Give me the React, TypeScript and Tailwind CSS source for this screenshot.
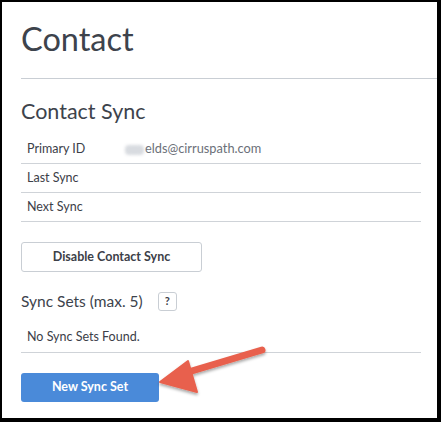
const Row = ({ label, value }: { label: string; value?: React.ReactNode }) => (
  <div className="flex h-[29px] items-center border-b border-[#cfd3d8] pl-[6px] text-[12.5px] text-[#3c4048]">
    <span className="w-[98px]">{label}</span>
    {value}
  </div>
)

const Arrow = () => (
  <svg
    className="absolute left-[150px] top-[340px]"
    width="125"
    height="60"
    viewBox="0 0 125 60"
  >
    <defs>
      <filter id="sh" x="-20%" y="-20%" width="140%" height="160%">
        <feDropShadow dx="0" dy="2" stdDeviation="1.5" floodColor="#000" floodOpacity="0.35" />
      </filter>
    </defs>
    <g filter="url(#sh)">
      <path d="M112 10 L35 33" stroke="#e8614d" strokeWidth="7" strokeLinecap="round" />
      <path d="M10 42 L38 21 L47 52 Z" fill="#e8614d" strokeLinejoin="round" stroke="#e8614d" strokeWidth="2" />
    </g>
  </svg>
)

export default function App() {
  return (
    <div
      className="relative h-[422px] w-[441px] overflow-hidden bg-black pb-[4px] pl-[2px] pr-[4px] pt-[2px]"
      style={{ fontFamily: 'Lato, "Open Sans", sans-serif' }}
    >
      <div className="h-full w-full bg-white">
        <div className="pl-[19px]">
          <h1 className="pt-[17px] text-[32.5px] leading-[40px] text-[#3d434c]">Contact</h1>
          <div className="mt-[19px] h-px bg-[#c9ced4]" />
        </div>
        <div className="px-[19px] pr-[16px]">
          <h2 className="mt-[20px] text-[21.5px] leading-[24px] text-[#3d434c]">Contact Sync</h2>
          <div className="mt-[12px]">
            <Row
              label="Primary ID"
              value={
                <span className="text-[12.8px] text-[#6b7079]">
                  <span className="mr-px inline-block h-[10px] w-[19px] rounded-sm bg-[#d8dbe0] align-middle blur-[1.5px]" />
                  elds@cirruspath.com
                </span>
              }
            />
            <Row label="Last Sync" />
            <Row label="Next Sync" />
          </div>
          <button className="mt-[20px] h-[30px] w-[181px] rounded-[3px] border border-[#c9ced4] bg-white text-[12.5px] font-bold text-[#3c4048]">
            Disable Contact Sync
          </button>
          <div className="mt-[18px] flex items-center">
            <h3 className="text-[15.5px] leading-[22px] text-[#3d434c]">Sync Sets (max. 5)</h3>
            <span className="ml-[15px] flex h-[19px] w-[19px] items-center justify-center rounded-[3px] border border-[#c9ced4] text-[11px] font-bold text-[#3c4048]">
              ?
            </span>
          </div>
          <div className="mt-[11px] flex h-[30px] items-center border-b border-[#cfd3d8] pl-[6px] text-[12.5px] text-[#3c4048]">
            No Sync Sets Found.
          </div>
          <button className="mt-[20px] h-[29px] w-[138px] rounded-[3px] bg-[#4a8ad9] text-[12.5px] font-bold text-white">
            New Sync Set
          </button>
        </div>
      </div>
      <Arrow />
    </div>
  )
}
